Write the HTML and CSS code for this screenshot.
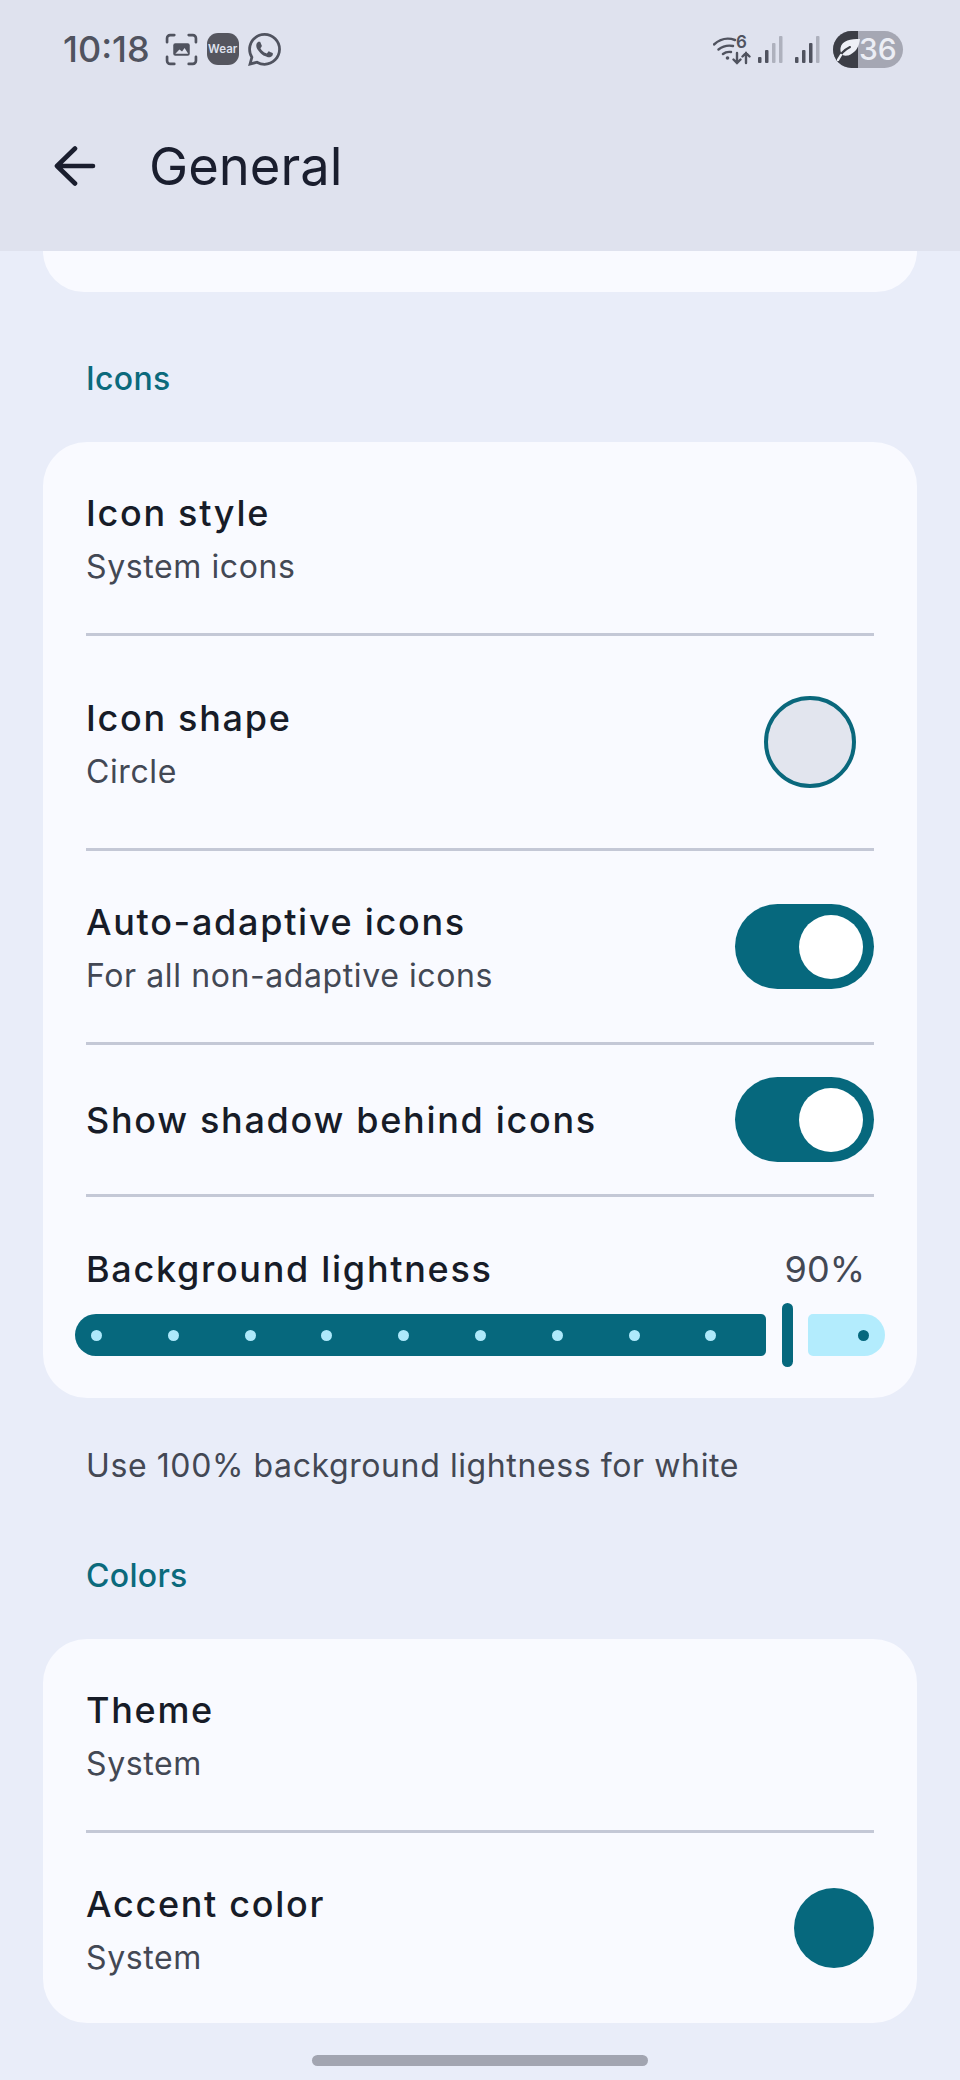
FILE: index.html
```html
<!DOCTYPE html>
<html>
<head>
  <meta charset="UTF-8">
  <meta name="viewport" content="width=device-width, initial-scale=1.0">
  <link rel="stylesheet" href="styles.css">
</head>
<body>
  <div class="header">
    <div class="status-bar">
      <div class="status-left">
        <span class="clock">10:18</span>
        <svg class="status-icon" viewBox="0 0 32 32" fill="none" stroke="#50535f" stroke-width="2.6" stroke-linecap="round">
          <path d="M2 9V5a3 3 0 0 1 3-3h4M23 2h4a3 3 0 0 1 3 3v4M30 23v4a3 3 0 0 1-3 3h-4M9 30H5a3 3 0 0 1-3-3v-4"/>
          <rect x="8" y="10" width="16" height="12" rx="2" fill="#50535f" stroke="none"/>
          <path d="M10 20l4-4 2.500 2 2.500-3.500 3.500 5.500z" fill="#dfe2ee" stroke="none"/>
        </svg>
        <span class="wear-icon">Wear</span>
        <svg class="status-icon" viewBox="0 0 24 24" fill="#50535f">
          <path d="M17.472 14.382c-.297-.149-1.758-.867-2.03-.967-.273-.099-.471-.148-.67.15-.197.297-.767.966-.94 1.164-.173.199-.347.223-.644.075-.297-.15-1.255-.463-2.39-1.475-.883-.788-1.48-1.761-1.653-2.059-.173-.297-.018-.458.13-.606.134-.133.298-.347.446-.52.149-.174.198-.298.298-.497.099-.198.05-.371-.025-.52-.075-.149-.669-1.612-.916-2.207-.242-.579-.487-.5-.669-.51-.173-.008-.371-.01-.57-.01-.198 0-.52.074-.792.372-.272.297-1.04 1.016-1.04 2.479 0 1.462 1.065 2.875 1.213 3.074.149.198 2.096 3.2 5.077 4.487.709.306 1.262.489 1.694.625.712.227 1.36.195 1.871.118.571-.085 1.758-.719 2.006-1.413.248-.694.248-1.289.173-1.413-.074-.124-.272-.198-.57-.347m-5.421 7.403h-.004a9.87 9.87 0 01-5.031-1.378l-.361-.214-3.741.982.998-3.648-.235-.374a9.86 9.86 0 01-1.51-5.26c.001-5.45 4.436-9.884 9.888-9.884 2.64 0 5.122 1.03 6.988 2.898a9.825 9.825 0 012.893 6.994c-.003 5.45-4.437 9.884-9.885 9.884m8.413-18.297A11.815 11.815 0 0012.05 0C5.495 0 .16 5.335.157 11.892c0 2.096.547 4.142 1.588 5.945L.057 24l6.305-1.654a11.882 11.882 0 005.683 1.448h.005c6.554 0 11.89-5.335 11.893-11.893a11.821 11.821 0 00-3.48-8.413z"/>
        </svg>
      </div>
      <div class="status-right">
        <svg class="wifi-icon" viewBox="0 -4 38 36" fill="none" stroke="#50535f" stroke-width="2.4" stroke-linecap="round">
          <path d="M1 9.500C7 4 15 2.500 22 5M5.500 14.500C10 11 15 10 20 11M10 19c2.500-2 5-2.500 8-2"/>
          <circle cx="14.500" cy="23" r="1.800" fill="#50535f" stroke="none"/>
          <path d="M24 18v10M20.500 24.500l3.500 3.500 3.500-3.500M33 28V18M29.500 21.500l3.500-3.500 3.500 3.500"/>
          <text x="23" y="13" class="wifi-six">6</text>
        </svg>
        <svg class="signal-icon" viewBox="0 0 25 27">
          <rect x="0" y="21" width="3.500" height="6" rx="1" fill="#50535f"/>
          <rect x="7" y="14" width="3.500" height="13" rx="1" fill="#50535f"/>
          <rect x="14" y="7" width="3.500" height="20" rx="1" fill="#aeb1bd"/>
          <rect x="21" y="0" width="3.500" height="27" rx="1" fill="#aeb1bd"/>
        </svg>
        <svg class="signal-icon" viewBox="0 0 25 27">
          <rect x="0" y="21" width="3.500" height="6" rx="1" fill="#50535f"/>
          <rect x="7" y="14" width="3.500" height="13" rx="1" fill="#50535f"/>
          <rect x="14" y="7" width="3.500" height="20" rx="1" fill="#50535f"/>
          <rect x="21" y="0" width="3.500" height="27" rx="1" fill="#aeb1bd"/>
        </svg>
        <div class="battery">
          <div class="battery-fill">
            <svg class="leaf" viewBox="0 0 24 24" fill="none">
              <path d="M23 2C14 2 5 3 3.500 11c-.5 3 .5 5.500 2 7 2 1 5.500 1 8-.5C20 14 22 9 23 2z" fill="#eef0f6"/>
              <path d="M1 23c2-6 6-10 12-13" stroke="#3c3e46" stroke-width="2" stroke-linecap="round"/>
              <path d="M1 23l3-5" stroke="#eef0f6" stroke-width="2.400" stroke-linecap="round"/>
            </svg>
          </div>
          <span class="battery-level">36</span>
        </div>
      </div>
    </div>
    <div class="toolbar">
      <svg class="back-icon" viewBox="0 0 42 40" fill="none" stroke="#1a1e2e" stroke-width="4.600" stroke-linecap="round" stroke-linejoin="round">
        <path d="M39 20H3M21 2.500L3 20l18 17.500"/>
      </svg>
      <div class="page-title">General</div>
    </div>
  </div>

  <div class="content">
    <div class="card card-stub"></div>

    <div class="section-label section-label-first">Icons</div>
    <div class="card">
      <div class="row row-1">
        <div class="row-text">
          <div class="row-title">Icon style</div>
          <div class="row-sub">System icons</div>
        </div>
      </div>
      <div class="row row-2">
        <div class="row-text">
          <div class="row-title">Icon shape</div>
          <div class="row-sub">Circle</div>
        </div>
        <div class="shape-preview"></div>
      </div>
      <div class="row row-3">
        <div class="row-text">
          <div class="row-title">Auto-adaptive icons</div>
          <div class="row-sub">For all non-adaptive icons</div>
        </div>
        <div class="toggle"><div class="toggle-knob"></div></div>
      </div>
      <div class="row row-4">
        <div class="row-title">Show shadow behind icons</div>
        <div class="toggle"><div class="toggle-knob"></div></div>
      </div>
      <div class="slider-block">
        <div class="slider-head">
          <div class="row-title">Background lightness</div>
          <div class="slider-value">90%</div>
        </div>
        <div class="slider">
          <div class="slider-active">
            <span class="dot"></span><span class="dot"></span><span class="dot"></span>
            <span class="dot"></span><span class="dot"></span><span class="dot"></span>
            <span class="dot"></span><span class="dot"></span><span class="dot"></span>
          </div>
          <div class="slider-thumb"></div>
          <div class="slider-rest"><span class="dot dot-dark"></span></div>
        </div>
      </div>
    </div>
    <div class="card-note">Use 100% background lightness for white</div>

    <div class="section-label">Colors</div>
    <div class="card">
      <div class="row row-5">
        <div class="row-text">
          <div class="row-title">Theme</div>
          <div class="row-sub">System</div>
        </div>
      </div>
      <div class="row row-6">
        <div class="row-text">
          <div class="row-title">Accent color</div>
          <div class="row-sub">System</div>
        </div>
        <div class="accent-swatch"></div>
      </div>
    </div>

    <div class="home-bar"></div>
  </div>
</body>
</html>
```

FILE: styles.css
```css
* {
  margin: 0;
  padding: 0;
  box-sizing: border-box;
}

body {
  width: 960px;
  height: 2080px;
  background: #e9edf9;
  font-family: Inter, "Noto Sans", sans-serif;
  color: #171c28;
  overflow: hidden;
}

.header {
  height: 251px;
  background: #dfe2ee;
}

.status-bar {
  height: 98px;
  padding: 0 57px 0 63px;
  display: flex;
  justify-content: space-between;
  align-items: center;
}

.status-left,
.status-right {
  display: flex;
  align-items: center;
}

.clock {
  font-size: 36px;
  font-weight: 500;
  color: #50535f;
  margin-right: 15px;
}

.status-icon {
  width: 33px;
  height: 33px;
}

.wear-icon {
  width: 32px;
  height: 32px;
  margin: 0 9px;
  border-radius: 11px;
  background: #55565f;
  color: #dfe2ee;
  font-size: 11.500px;
  font-weight: 600;
  display: flex;
  align-items: center;
  justify-content: center;
}

.wifi-icon {
  width: 38px;
  height: 36px;
  margin-right: 7px;
}

.wifi-six {
  font-family: Inter, sans-serif;
  font-size: 17px;
  font-weight: 600;
  fill: #50535f;
  stroke: none;
}

.signal-icon {
  width: 25px;
  height: 27px;
  margin-right: 12px;
}

.battery {
  width: 70px;
  height: 37px;
  margin-left: 1px;
  border-radius: 19px;
  background: #a5a7b3;
  overflow: hidden;
  display: flex;
  align-items: center;
}

.battery-fill {
  width: 25px;
  height: 37px;
  background: #3c3e46;
  flex-shrink: 0;
  display: flex;
  align-items: center;
  padding-left: 4px;
}

.leaf {
  width: 24px;
  height: 24px;
  flex-shrink: 0;
}

.battery-level {
  font-size: 30px;
  font-weight: 500;
  color: #eceef5;
  margin-left: 1px;
}

.toolbar {
  display: flex;
  align-items: center;
  padding: 36px 0 0 54px;
}

.back-icon {
  width: 42px;
  height: 40px;
}

.page-title {
  font-size: 52.500px;
  font-weight: 400;
  color: #1a1e2e;
  margin-left: 53px;
}

.content {
  padding: 0 43px;
}

.card {
  background: #f9faff;
  border-radius: 44px;
}

.card-stub {
  height: 41px;
  border-radius: 0 0 44px 44px;
}

.section-label {
  font-size: 32px;
  font-weight: 450;
  letter-spacing: 0.3px;
  color: #0b6a7c;
  padding: 0 0 0 43px;
  height: 60px;
  line-height: 60px;
  margin-top: 59px;
  margin-bottom: 33px;
}

.section-label-first {
  margin-top: 57px;
}

.row {
  margin: 0 43px;
  display: flex;
  align-items: center;
  justify-content: space-between;
  border-bottom: 3px solid #c4c8d6;
}

.row-text {
  padding-top: 3px;
}

.row-1 { height: 194px; }
.row-2 { height: 215px; }
.row-3 { height: 194px; }
.row-4 { height: 152px; }
.row-5 { height: 194px; }
.row-6 {
  height: 190px;
  border-bottom: 0;
}

.row-title {
  font-size: 36px;
  font-weight: 470;
  line-height: 46px;
  letter-spacing: 1.700px;
}

.row-sub {
  font-size: 32px;
  line-height: 42px;
  margin-top: 10px;
  color: #434854;
  letter-spacing: 0.6px;
}

.shape-preview {
  width: 92px;
  height: 92px;
  margin-right: 18px;
  border-radius: 50%;
  background: #e2e5ee;
  border: 4px solid #0a687c;
}

.toggle {
  width: 139px;
  height: 85px;
  border-radius: 43px;
  background: #06687d;
  display: flex;
  justify-content: flex-end;
  align-items: center;
  padding-right: 11px;
}

.toggle-knob {
  width: 64px;
  height: 64px;
  border-radius: 50%;
  background: #fff;
}

.slider-block {
  height: 201px;
  padding: 49px 32px 0;
}

.slider-head {
  display: flex;
  justify-content: space-between;
  align-items: center;
  padding: 0 20px 0 11px;
}

.slider-value {
  font-size: 36px;
  color: #434854;
}

.slider {
  display: flex;
  align-items: center;
  height: 64px;
  margin-top: 11px;
}

.slider-active {
  width: 691px;
  height: 42px;
  border-radius: 21px 5px 5px 21px;
  background: #06687d;
  display: flex;
  align-items: center;
  gap: 65.800px;
  padding-left: 16px;
}

.dot {
  width: 11px;
  height: 11px;
  border-radius: 50%;
  background: #aee9fb;
  flex-shrink: 0;
}

.dot-dark {
  background: #06687d;
}

.slider-thumb {
  width: 11px;
  height: 64px;
  margin: 0 15px 0 16px;
  border-radius: 6px;
  background: #06687d;
}

.slider-rest {
  width: 77px;
  height: 42px;
  border-radius: 5px 21px 21px 5px;
  background: #b3ecfd;
  display: flex;
  align-items: center;
  padding-left: 50px;
}

.card-note {
  font-size: 32px;
  color: #434854;
  letter-spacing: 0.6px;
  padding: 47px 0 0 43px;
  line-height: 42px;
}

.accent-swatch {
  width: 80px;
  height: 80px;
  border-radius: 50%;
  background: #06687d;
}

.home-bar {
  width: 336px;
  height: 11px;
  margin: 32px auto 0;
  border-radius: 6px;
  background: #a2a5b1;
}
```
